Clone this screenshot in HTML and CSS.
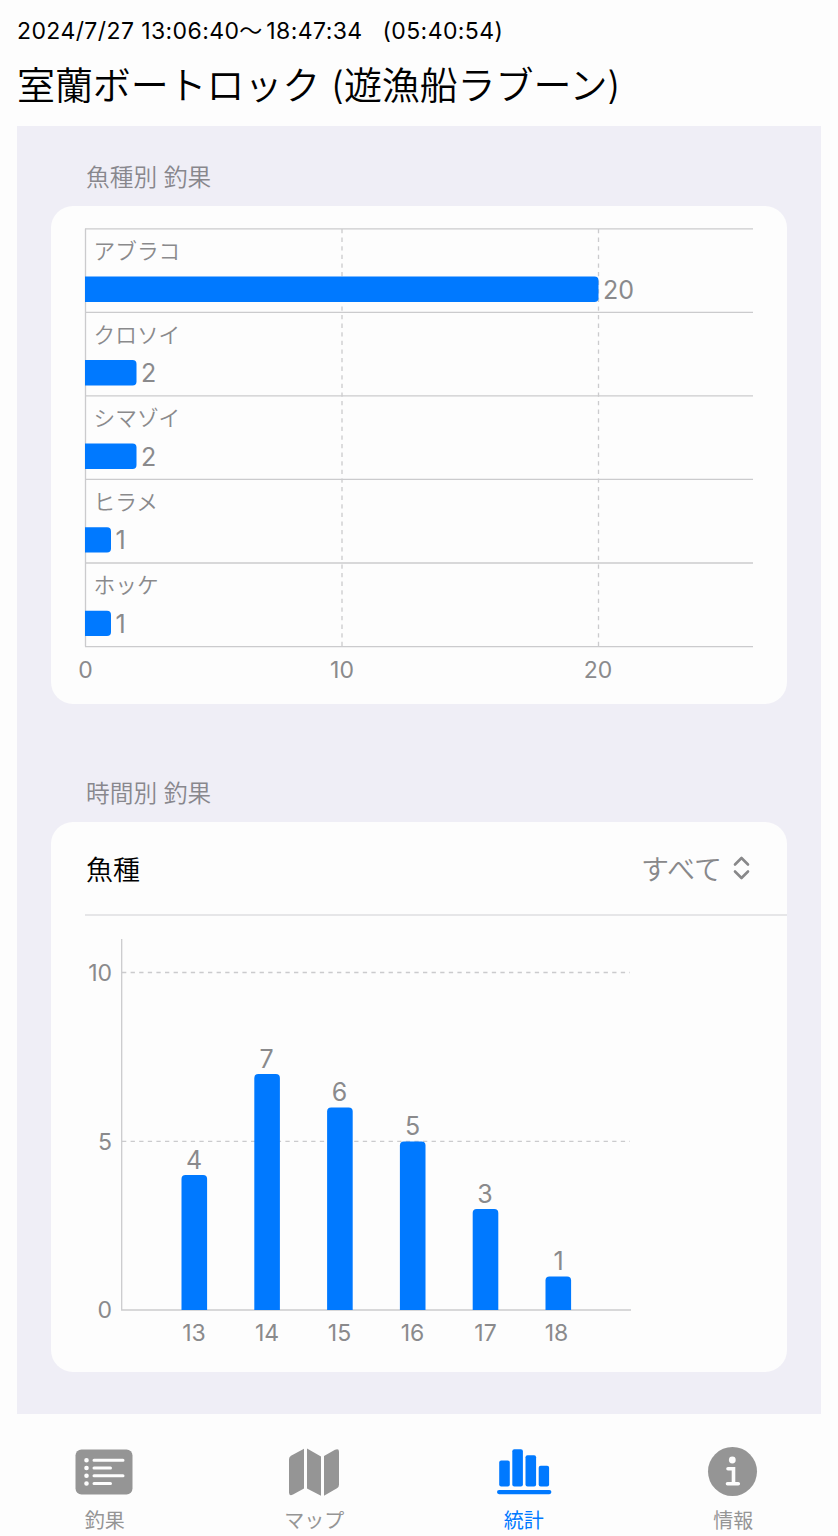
FILE: index.html
```html
<!DOCTYPE html>
<html lang="ja">
<head>
    <meta charset="UTF-8">
    <meta name="viewport" content="width=device-width, initial-scale=1.0">
    <title>室蘭ボートロック - 統計</title>
    <link rel="stylesheet" href="styles.css">
</head>
<body>
    <div class="header">
        <div class="trip-time"><span>2024/7/27 13:06:40</span><span class="wave">～</span><span>18:47:34</span><span class="duration">(05:40:54)</span></div>
        <h1>室蘭ボートロック (遊漁船ラブーン)</h1>
    </div>

    <div class="content">
        <h2>魚種別 釣果</h2>
        <div class="card card-species">
            <svg class="chart" width="736" height="498" viewBox="0 0 736 498">
                <!-- 横線 -->
                <path class="line" d="M34 22.8H702M34 106.4H702M34 189.9H702M34 273.4H702M34 357H702M34 440.6H702"/>
                <path class="line" d="M34.5 22.8V440.6"/>
                <path class="grid" d="M291 23V440M547.5 23V440"/>

                <!-- 棒 -->
                <path class="bar" d="M34 70.5H543.5a4 4 0 0 1 4 4V92a4 4 0 0 1 -4 4H34z"/>
                <path class="bar" d="M34 154H81.5a4 4 0 0 1 4 4V175.4a4 4 0 0 1 -4 4H34z"/>
                <path class="bar" d="M34 237.6H81.5a4 4 0 0 1 4 4V259a4 4 0 0 1 -4 4H34z"/>
                <path class="bar" d="M34 321.2H56a4 4 0 0 1 4 4V342.6a4 4 0 0 1 -4 4H34z"/>
                <path class="bar" d="M34 404.7H56a4 4 0 0 1 4 4V426a4 4 0 0 1 -4 4H34z"/>

                <g class="name">
                    <text x="42.5" y="53">アブラコ</text>
                    <text x="42.5" y="136.6">クロソイ</text>
                    <text x="42.5" y="220.2">シマゾイ</text>
                    <text x="42.5" y="303.8">ヒラメ</text>
                    <text x="42.5" y="387.4">ホッケ</text>
                </g>
                <g class="value">
                    <text x="552" y="92.5">20</text>
                    <text x="90" y="176">2</text>
                    <text x="90" y="259.6">2</text>
                    <text x="64.5" y="343.2">1</text>
                    <text x="64.5" y="426.8">1</text>
                </g>
                <g class="axis middle">
                    <text x="34.5" y="472">0</text>
                    <text x="291" y="472">10</text>
                    <text x="547" y="472">20</text>
                </g>
            </svg>
        </div>

        <h2>時間別 釣果</h2>
        <div class="card card-time">
            <div class="picker">
                <span class="picker-label">魚種</span>
                <span class="picker-value">すべて
                    <svg width="17" height="24" viewBox="0 0 17 24">
                        <path d="M2 8.5L8.5 2L15 8.5M2 15.5L8.5 22L15 15.5"/>
                    </svg>
                </span>
            </div>
            <svg class="chart" width="736" height="456" viewBox="0 0 736 456">
                <path class="grid" d="M71 56.5H579M71 225.3H579"/>
                <path class="line" d="M70.7 23V394H580"/>

                <path class="bar" d="M130.5 394V263a4 4 0 0 1 4 -4h17.6a4 4 0 0 1 4 4V394z"/>
                <path class="bar" d="M203.3 394V162a4 4 0 0 1 4 -4h17.6a4 4 0 0 1 4 4V394z"/>
                <path class="bar" d="M276.1 394V195.6a4 4 0 0 1 4 -4h17.6a4 4 0 0 1 4 4V394z"/>
                <path class="bar" d="M348.9 394V229.4a4 4 0 0 1 4 -4h17.6a4 4 0 0 1 4 4V394z"/>
                <path class="bar" d="M421.7 394V297a4 4 0 0 1 4 -4h17.6a4 4 0 0 1 4 4V394z"/>
                <path class="bar" d="M494.5 394V364.4a4 4 0 0 1 4 -4h17.6a4 4 0 0 1 4 4V394z"/>

                <g class="value middle">
                    <text x="143" y="252.5">4</text>
                    <text x="215.5" y="151.5">7</text>
                    <text x="288.5" y="185">6</text>
                    <text x="361.5" y="219">5</text>
                    <text x="434" y="286.5">3</text>
                    <text x="507.5" y="354">1</text>
                </g>
                <g class="axis end">
                    <text x="61" y="65">10</text>
                    <text x="61" y="233.5">5</text>
                    <text x="61" y="402">0</text>
                </g>
                <g class="axis middle">
                    <text x="143" y="425">13</text>
                    <text x="216" y="425">14</text>
                    <text x="288.5" y="425">15</text>
                    <text x="361.5" y="425">16</text>
                    <text x="434.5" y="425">17</text>
                    <text x="505.5" y="425">18</text>
                </g>
            </svg>
        </div>
    </div>

    <div class="tabs">
        <a href="#">
            <svg width="58" height="50" viewBox="0 0 58 50">
                <rect x="-0.5" y="2.5" width="57" height="45" rx="6"/>
                <path class="cut-line" d="M18 13.3H47M18 21H34.5M18 28.7H47M18 36.5H34.5"/>
                <path class="cut-dots" d="M10.5 13.3h.01M10.5 21h.01M10.5 28.7h.01M10.5 36.5h.01"/>
            </svg>
            <span>釣果</span>
        </a>
        <a href="#">
            <svg width="58" height="50" viewBox="0 0 58 50">
                <path d="M4 12.2Q4 9.8 6 8.7L19 1.8V41.5L8 47.5Q4 49.5 4 45.5z"/>
                <path d="M22 1.5L36 9.5V48.8L22 41.5z"/>
                <path d="M39 9L50 2.8Q54 1 54 4.7V37.8Q54 40.2 52 41.3L39 48.8z"/>
            </svg>
            <span>マップ</span>
        </a>
        <a href="#" class="active">
            <svg width="58" height="50" viewBox="0 0 58 50">
                <rect x="4.2" y="13.5" width="10.6" height="26" rx="2"/>
                <rect x="17.3" y="2.2" width="10.6" height="37.3" rx="2"/>
                <rect x="30.5" y="8.2" width="10.6" height="31.3" rx="2"/>
                <rect x="43.7" y="18.7" width="10.4" height="20.8" rx="2"/>
                <rect x="2" y="43" width="54.4" height="4.2" rx="2.1"/>
            </svg>
            <span>統計</span>
        </a>
        <a href="#">
            <svg width="58" height="50" viewBox="0 0 58 50">
                <circle cx="28.5" cy="24.5" r="24.5"/>
                <circle class="cut-dot" cx="28.3" cy="13" r="3.4"/>
                <path class="cut-line cut-info" d="M24 21.8H29.5V36.5M23.5 36.8H34.3"/>
            </svg>
            <span>情報</span>
        </a>
    </div>
</body>
</html>
```

FILE: styles.css
```css
* {
    box-sizing: border-box;
}
body, html {
    margin: 0;
    padding: 0;
    background-color: #fdfdfd;
    color: #000000;
    font-family: Inter, "Noto Sans CJK JP", sans-serif;
}
body {
    height: 1536px;
    overflow: hidden;
    display: flex;
    flex-direction: column;
}
.header {
    height: 126px;
    padding: 16px 17px 0;
    white-space: nowrap;
}
.trip-time {
    display: flex;
    height: 30px;
    line-height: 30px;
    font-size: 23px;
    letter-spacing: 0.4px;
}
.wave {
    width: 27px;
    font-weight: 350;
}
.duration {
    margin-left: 20px;
}
.header h1 {
    margin: 10px 0 0;
    font-size: 38px;
    line-height: 58px;
    font-weight: 350;
    letter-spacing: -0.1px;
}
.content {
    height: 1288px;
    margin: 0 17px;
    padding: 0 34px;
    background-color: #efeef6;
}
.content h2 {
    margin: 0;
    padding: 37px 35px 0;
    height: 80px;
    font-size: 23.7px;
    line-height: 30px;
    font-weight: 350;
    color: #88878d;
}
.card {
    background-color: #fdfdfd;
    border-radius: 22px;
}
.card-species {
    height: 498px;
    margin-bottom: 38px;
}
.card-time {
    height: 550px;
}
.chart {
    display: block;
}
.line {
    fill: none;
    stroke: #cbcbcd;
    stroke-width: 1.3;
}
.grid {
    fill: none;
    stroke: #cbcbcd;
    stroke-width: 1.3;
    stroke-dasharray: 4.3 4.3;
}
.bar {
    fill: #0079ff;
}
.name, .value, .axis {
    fill: #8a8a8c;
}
.name {
    font-size: 21.7px;
    font-weight: 350;
}
.value {
    font-size: 25px;
}
.axis {
    font-size: 23px;
}
.middle {
    text-anchor: middle;
}
.end {
    text-anchor: end;
}
.picker {
    display: flex;
    justify-content: space-between;
    align-items: center;
    height: 94px;
    margin-left: 34px;
    padding: 0 37px 0 1px;
    border-bottom: 2px solid #e6e6e8;
    font-size: 27px;
}
.picker-label {
    font-weight: 350;
}
.picker-value {
    display: flex;
    align-items: center;
    gap: 11px;
    color: #88888a;
    font-size: 28px;
    font-weight: 350;
}
.picker-value svg {
    fill: none;
    stroke: #88888a;
    stroke-width: 2.6;
    stroke-linecap: round;
    stroke-linejoin: round;
}
.tabs {
    display: flex;
    height: 122px;
    padding-top: 33px;
}
.tabs a {
    flex: 1;
    display: flex;
    flex-direction: column;
    align-items: center;
    color: #959595;
    font-size: 20px;
    line-height: 28px;
    text-decoration: none;
}
.tabs a.active {
    color: #0079ff;
}
.tabs svg {
    fill: currentColor;
    margin-bottom: 10px;
    overflow: visible;
}
.tabs .cut-line, .tabs .cut-dots {
    fill: none;
    stroke: #fdfdfd;
    stroke-width: 3;
    stroke-linecap: round;
}
.tabs .cut-info {
    stroke-width: 3.6;
}
.tabs .cut-dots {
    stroke-width: 4.6;
}
.tabs .cut-dot {
    fill: #fdfdfd;
}
```
